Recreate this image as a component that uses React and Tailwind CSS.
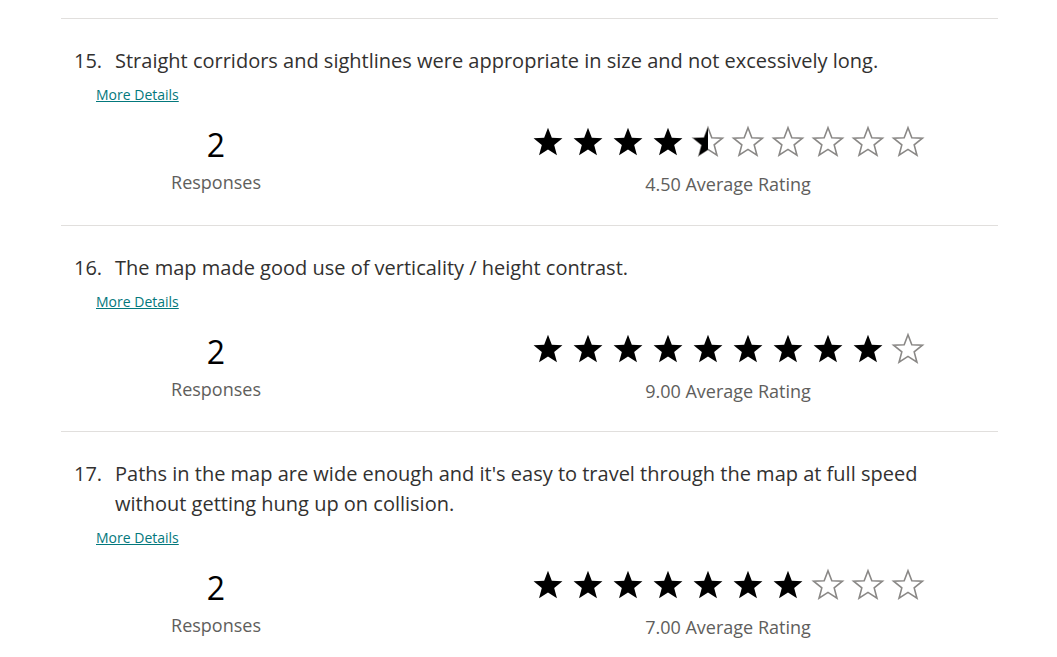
import React from 'react';

const questions = [
  {
    num: '15.',
    text: 'Straight corridors and sightlines were appropriate in size and not excessively long.',
    responses: 2,
    rating: 4.5,
  },
  {
    num: '16.',
    text: 'The map made good use of verticality / height contrast.',
    responses: 2,
    rating: 9,
  },
  {
    num: '17.',
    text: "Paths in the map are wide enough and it's easy to travel through the map at full speed without getting hung up on collision.",
    responses: 2,
    rating: 7,
  },
];

const STAR = '12,1.6 14.75,8.75 22.4,9.15 16.45,13.95 18.45,21.4 12,17.2 5.55,21.4 7.55,13.95 1.6,9.15 9.25,8.75';

function Star({ fill, id }) {
  // fill: 0 = empty, 0.5 = half, 1 = full
  return (
    <svg width="30" height="29" viewBox="1.2 1.2 21.6 20.6" className="shrink-0 overflow-visible">
      {fill < 1 && (
        <polygon points={STAR} fill="none" stroke="#8a8886" strokeWidth="1.15" strokeLinejoin="miter" />
      )}
      {fill === 1 && <polygon points={STAR} fill="#000" />}
      {fill > 0 && fill < 1 && (
        <>
          <defs>
            <clipPath id={id}>
              <rect x="0" y="0" width={24 * fill} height="24" />
            </clipPath>
          </defs>
          <polygon points={STAR} fill="#000" clipPath={`url(#${id})`} />
        </>
      )}
    </svg>
  );
}

function Stars({ rating, qid }) {
  return (
    <div className="flex gap-[10px]">
      {Array.from({ length: 10 }).map((_, i) => {
        const f = Math.max(0, Math.min(1, rating - i));
        return <Star key={i} fill={f} id={`clip-${qid}-${i}`} />;
      })}
    </div>
  );
}

function Question({ q }) {
  return (
    <div className="border-t border-[#e1dfdd] pt-[27px] pb-[28.5px]">
      <div className="flex text-[20px] leading-[30px] text-[#323130] pl-[13px] pr-[60px]">
        <span className="w-[41px] shrink-0">{q.num}</span>
        <span>{q.text}</span>
      </div>
      <div className="pl-[35px] mt-[9px] flex">
        <a href="#" className="block text-[14px] leading-[20px] text-[#03787c] underline">More Details</a>
      </div>
      <div className="flex items-start mt-[20px] pl-[35px]">
        <div className="w-[240px] flex flex-col items-center">
          <div className="text-[32px] leading-[40px] text-black">{q.responses}</div>
          <div className="text-[18px] leading-[24px] text-[#605e5c] mt-[5px]">Responses</div>
        </div>
        <div className="ml-[192px] flex flex-col items-center w-[400px]">
          <div className="mt-[2px]">
            <Stars rating={q.rating} qid={q.num} />
          </div>
          <div className="text-[18px] leading-[24px] text-[#605e5c] mt-[16px]">
            {q.rating.toFixed(2)} Average Rating
          </div>
        </div>
      </div>
    </div>
  );
}

export default function App() {
  return (
    <div className="bg-white min-h-[657px] pt-[18px]" style={{ fontFamily: '"Open Sans", "Noto Sans", sans-serif' }}>
      <div className="ml-[61px] w-[937px]">
        {questions.map((q) => (
          <Question key={q.num} q={q} />
        ))}
      </div>
    </div>
  );
}
